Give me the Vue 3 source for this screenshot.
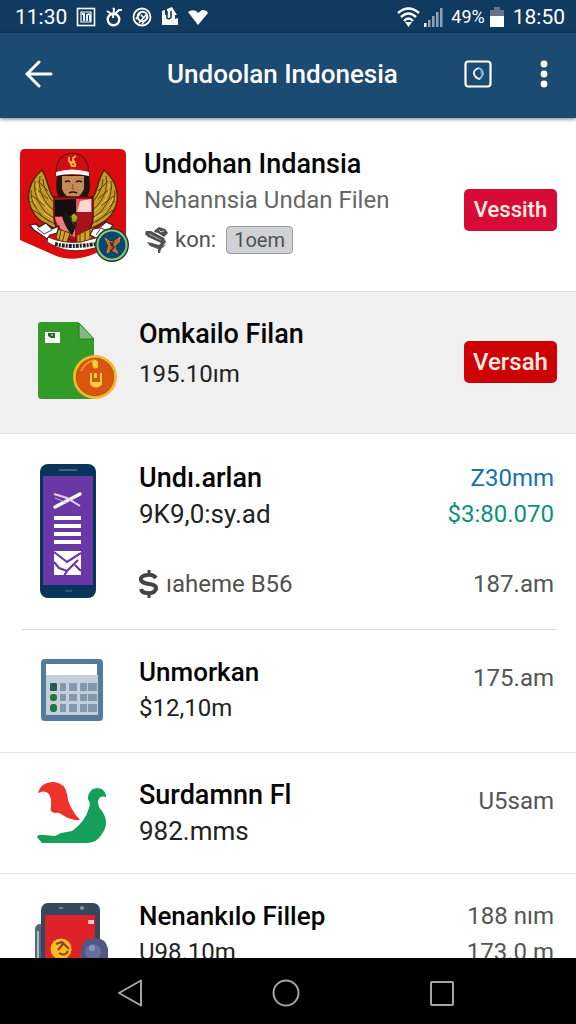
<script setup>
const wingSides = [undefined, 'translate(108 0) scale(-1 1)']
</script>

<template>
  <div class="screen">
    <div class="status">
      <span class="time">11:30</span>
      <div class="notices">
        <svg width="20" height="20" viewBox="0 0 20 20" fill="none" stroke="currentColor">
          <rect x="1.5" y="1.5" width="17" height="17" stroke-width="1.6" />
          <path d="M5 15V5H15V15Z" stroke-width="1.2" />
          <path d="M6 7H8V14M11 14V8Q14 6 14 9V14" stroke-width="1.8" />
        </svg>
        <svg width="18" height="20" viewBox="0 0 18 20" fill="none" stroke="currentColor">
          <circle cx="8.5" cy="12.5" r="5.8" stroke-width="2.4" />
          <path d="M2 4L8 8M8 11L9 2L8 1M10 7L14 3H17" stroke-width="2" />
        </svg>
        <svg width="20" height="20" viewBox="0 0 20 20" fill="none" stroke="currentColor">
          <circle cx="10" cy="10" r="8.5" stroke-width="1.8" />
          <circle cx="10.5" cy="9.5" r="4.8" stroke-width="2" />
          <path d="M4 12L9 5M7 16L14 8M10 17L16 10M9 8L12 11" stroke-width="1.6" />
        </svg>
        <svg width="18" height="20" viewBox="0 0 18 20">
          <path d="M1 18V4L4 3V8H6V2L11 0L14 5L16 8H14V12L17 11V18Z" fill="currentColor" />
          <path d="M6 4V11Q8 13 10 10V4" fill="none" stroke="#123a60" stroke-width="1.6" />
        </svg>
        <svg width="20" height="20" viewBox="0 0 20 20" fill="currentColor">
          <path d="M0 5Q4 2 8 4L10 6L14 3Q19 3 20 6L10 18Z" />
        </svg>
      </div>
      <div class="signals">
        <svg width="23" height="20" viewBox="0 0 23 20" fill="none" stroke="currentColor" stroke-width="2.4">
          <path d="M1 6Q11.5 -3 22 6M4 10Q11.5 3 19 10M7 14Q11.5 9 16 14" />
          <path d="M8 15H15L11.5 20Z" fill="currentColor" stroke="none" />
        </svg>
        <svg width="19" height="20" viewBox="0 0 19 20" fill="#8ba2b8">
          <path d="M0 16H2.500V20H0Z" fill="#fff" />
          <path d="M4 13H6.500V20H4ZM8 9H10.500V20H8ZM12 5H14.500V20H12ZM16 1H18.500V20H16Z" />
        </svg>
        <span class="percent">49%</span>
        <svg width="16" height="20" viewBox="0 0 16 20">
          <path d="M1 3H5V0H11V3H15V9H1Z" fill="#60758b" />
          <path d="M1 9H15V20H1Z" fill="#fff" />
        </svg>
        <span class="time">18:50</span>
      </div>
    </div>

    <header class="bar">
      <button class="icon-button" type="button" aria-label="Back">
        <svg width="28" height="28" viewBox="0 0 28 28" fill="none" stroke="currentColor" stroke-width="3" stroke-linecap="round">
          <path d="M14 2L2 14L14 26M3 14H26" />
        </svg>
      </button>
      <h1>Undoolan Indonesia</h1>
      <button class="icon-button" type="button" aria-label="Scan">
        <svg width="28" height="28" viewBox="0 0 28 28" fill="none" stroke="currentColor">
          <rect x="1.5" y="1.5" width="25" height="25" rx="3" stroke-width="2.2" />
          <path d="M15 8Q9 10 10 14Q11 18 16 19" stroke-width="1.8" />
          <path d="M15 8Q19 10 19 14L16 19" stroke="#94bfe0" stroke-width="1.8" />
          <path d="M17 11V14" stroke="#4386bd" stroke-width="2" />
        </svg>
      </button>
      <button class="icon-button more" type="button" aria-label="More options">
        <svg width="8" height="28" viewBox="0 0 8 28" fill="currentColor">
          <circle cx="4" cy="4" r="3.4" /><circle cx="4" cy="14" r="3.4" /><circle cx="4" cy="24" r="3.4" />
        </svg>
      </button>
    </header>

    <main class="list">
      <section class="row profile">
        <div class="art">
          <svg width="110" height="116" viewBox="0 0 110 116">
            <path d="M5 1H101Q107 1 107 7V88Q91 98 75 106Q53 115 35 107L1 92V7Q1 1 5 1Z" fill="#da0c10" />
            <g v-for="(side, i) in wingSides" :key="i" :transform="side">
              <path d="M23 22C10 33 6 49 13 62C18 74 29 76 39 83L40 52C29 51 31 34 23 22Z" fill="#c29a25" stroke="#4f2608" stroke-width="1.5" />
              <path d="M21 28Q18 43 29 57L39 66M16 33Q13 47 26 64L39 73M12 42Q11 56 24 69L39 78M24 31Q24 44 38 58M12 53L25 65M12 47L26 58M15 39L29 51M19 33L29 43M14 62L31 74" fill="none" stroke="#60400b" />
              <path d="M18 36Q16 50 32 63M14 50Q17 62 35 72" fill="none" stroke="#ebc957" />
            </g>
            <path d="M38 27Q35 52 45 52H66Q73 45 70 27Z" fill="#25130d" />
            <path d="M43 28H65V41Q61 50 54 51Q46 49 43 41Z" fill="#c28b58" />
            <path d="M46 34Q49 32 51 34M57 34Q60 32 63 34M50 45Q54 43 58 45" stroke="#351408" stroke-width="1.6" fill="none" />
            <path d="M54 36L53 41H56" stroke="#8c5029" fill="none" />
            <path d="M37 27Q36 6 53 5Q70 5 70 27Q54 20 37 27Z" fill="#cf0c16" stroke="#460705" />
            <path d="M37 24Q53 19 70 24V28Q53 24 37 28Z" fill="#fff" />
            <path d="M50 9V13Q53 16 56 13M51 14L53 18H57M57 8L54 10V14L57 17" stroke="#f4bd35" stroke-width="1.8" fill="none" />
            <path d="M35 49H74V70Q73 87 54 93Q36 86 35 70Z" fill="#a9121b" stroke="#511015" stroke-width="1.5" />
            <path d="M36 52L57 51V68H36Z" fill="#150e0e" /><path d="M57 51H73V64H57Z" fill="#e85052" />
            <path d="M61 53L72 51V64H58Z" fill="#ffd8d4" /><path d="M36 69H56V89Q38 83 36 69Z" fill="#ec7d85" />
            <path d="M46 63L58 76L53 88Q45 77 43 68Z" fill="#191714" />
            <path d="M52 68L55 65L59 69L57 74H53ZM53 75L58 78" fill="#a5aa21" stroke="#3f4612" />
            <path d="M39 81L51 85L47 97L37 90ZM58 87L75 79L72 93L58 98Z" fill="#d7a12c" stroke="#553205" />
            <path d="M42 82L40 92M46 84L43 95M61 86V97M66 84V96M71 82V92" stroke="#573407" />
            <path d="M11 77L17 76L20 79L27 75L33 81L40 78L38 85L31 87L28 91L21 86L15 82ZM74 81L80 80L87 74L94 77L90 82L86 84L79 91L71 87Z" fill="#fff" stroke="#3b1b17" stroke-width="1.2" />
            <path d="M18 80L25 86L33 82M77 87L82 80L88 83" fill="none" stroke="#503b36" />
            <path d="M29 89Q45 96 62 94L80 89L84 97Q65 105 47 102Q37 100 28 94Z" fill="#fff" stroke="#612314" />
            <path d="M36 96Q51 100 76 96" fill="none" stroke="#222" stroke-width="4" stroke-dasharray="3 1 2 1" />
            <circle cx="93" cy="97" r="17" fill="#153f32" />
            <circle cx="93" cy="97" r="14.5" fill="#07486d" stroke="#98c574" stroke-width="2" />
            <path d="M86 90L91 94H95L101 89L100 94L96 97V101L99 105L93 102L88 105L90 98Z" fill="#c85b20" stroke="#ec8b36" />
            <path d="M91 94L95 99L91 104M95 93L92 98" fill="none" stroke="#42250e" stroke-width="1.4" />
          </svg>
        </div>
        <div class="copy">
          <h2>Undohan Indansia</h2>
          <p class="subtle">Nehannsia Undan Filen</p>
          <p class="meta">
            <svg width="24" height="26" viewBox="0 0 24 26" fill="#505050">
              <path d="M11 3L15 0L21 2L24 6L20 10L14 6L10 5ZM2 4H7L20 11L22 15L19 19L23 17L17 22L16 26H14V22L6 19L3 15L8 16L15 18L17 16L4 10L1 7Z" />
              <path d="M5 7L17 13" stroke="#b0b0b0" />
              <path d="M15 3L17 5L20 4" fill="none" stroke="#ccc" />
            </svg>
            <span>kon:</span><span class="chip">1oem</span>
          </p>
        </div>
        <button class="action rose" type="button">Vessith</button>
      </section>

      <section class="row featured">
        <div class="art">
          <svg width="82" height="82" viewBox="0 0 82 82">
            <path d="M4 1H41L57 18V78H4Q1 78 1 74V4Q1 1 4 1Z" fill="#329b27" />
            <path d="M42 2V18H57Z" fill="#82bb7e" stroke="#217d1d" />
            <path d="M8 11H23V22H8Z" fill="#fff" /><path d="M11 12H18V17H14L11 15Z" fill="#216b1e" /><path d="M14 14H16" stroke="#fff" />
            <circle cx="58" cy="56" r="22" fill="#f2b82e" />
            <circle cx="58" cy="56" r="18.5" fill="#d95611" stroke="#bb5a0b" stroke-width="1.5" />
            <path d="M44 50Q48 41 58 39" stroke="#ff8b28" stroke-width="2" fill="none" />
            <path d="M55 41Q58 37 61 41V46Q58 49 56 46Z" fill="#ffcc3c" />
            <path d="M54 52V63Q59 68 64 63V52" fill="none" stroke="#ffcc3c" stroke-width="2" />
            <path d="M54 61H64V64Q59 68 54 64ZM57 52H60V57H57Z" fill="#ffcc3c" />
          </svg>
        </div>
        <div class="copy"><h2>Omkailo Filan</h2><p>195.10ım</p></div>
        <button class="action" type="button">Versah</button>
      </section>

      <section class="row plan">
        <div class="art">
          <svg width="58" height="136" viewBox="0 0 58 136">
            <rect x="1" y="1" width="56" height="134" rx="8" fill="#0b345a" />
            <path d="M4 13H54V122H4Z" fill="#6938a4" />
            <path d="M20 7H38" stroke="#42627b" stroke-width="2" /><path d="M26 128H33" stroke="#345472" stroke-width="2" />
            <path d="M16 44L41 31" stroke="#fff" stroke-width="3.4" stroke-linecap="round" /><path d="M15 31L28 35L41 43" fill="none" stroke="#e6d2ef" stroke-width="2" /><path d="M16 35L28 40" stroke="#c9addd" />
            <path d="M15 55H42M15 63H42M15 71H42M15 79H42" stroke="#fff" stroke-width="4" />
            <path d="M15 88H42V112H15Z" fill="#fff" />
            <path d="M15 89L28 99L42 90M15 99L20 105L28 108L39 97M28 108L25 113M36 102L42 108" fill="none" stroke="#6938a4" stroke-width="2.2" />
          </svg>
        </div>
        <div class="copy">
          <h2>Undı.arlan</h2><p class="large">9K9,0:sy.ad</p>
          <p class="meta later">
            <svg width="20" height="30" viewBox="0 0 20 30" fill="none" stroke="#444" stroke-width="4">
              <path d="M17 9Q14 5 8 6Q1 7 2 11Q3 14 10 15Q18 16 17 20Q15 25 8 24Q3 24 2 20" /><path d="M10 1V7M10 23V29" stroke-width="3" />
            </svg><span>ıaheme B56</span>
          </p>
        </div>
        <div class="values"><span class="blue">Z30mm</span><span class="green">$3:80.070</span><span class="later">187.am</span></div>
      </section>

      <section class="row compact">
        <div class="art">
          <svg width="64" height="64" viewBox="0 0 64 64">
            <rect x="1" y="1" width="62" height="62" rx="4" fill="#557b9b" />
            <path d="M6 6H57V17H6Z" fill="#fff" /><path d="M6 17H58V57H6Z" fill="#c5cfdb" />
            <path d="M20 25H26V33H20ZM29 25H37V33H29ZM40 25H47V33H40ZM48 25H57V33H48ZM20 36H26V43H20ZM29 36H37V43H29ZM40 36H47V43H40ZM48 36H57V43H48ZM20 46H26V54H20ZM29 46H37V54H29ZM40 46H47V54H40ZM48 46H57V54H48Z" fill="#8498ac" />
            <rect x="10" y="25" width="7" height="8" rx="1" fill="#285b58" /><rect x="10" y="36" width="7" height="7" rx="3" fill="#27733f" /><rect x="10" y="46" width="7" height="8" rx="3" fill="#237543" />
          </svg>
        </div>
        <div class="copy"><h2>Unmorkan</h2><p>$12,10m</p></div>
        <div class="values lowered"><span>175.am</span></div>
      </section>

      <section class="row bird">
        <div class="art">
          <svg width="70" height="64" viewBox="0 0 70 64">
            <path d="M1 12Q4 1 17 1Q28 2 30 13Q31 26 43 39Q34 40 24 33Q21 31 18 32Q12 31 14 26Q15 16 11 12Q7 9 1 12Z" fill="#ee332b" />
            <path d="M51 18Q51 8 60 7Q67 7 69 14V16Q62 14 61 21Q61 26 65 30Q73 42 65 53Q60 62 49 62H5L0 56Q1 53 7 54L18 55L24 52L35 50Q48 41 52 27Q54 23 51 18Z" fill="#14a05b" />
          </svg>
        </div>
        <div class="copy"><h2>Surdamnn Fl</h2><p class="large">982.mms</p></div>
        <div class="values lowered"><span>U5sam</span></div>
      </section>

      <section class="row compact">
        <div class="art">
          <svg width="76" height="76" viewBox="0 0 76 76">
            <rect x="1" y="22" width="18" height="60" rx="5" fill="#596879" /><path d="M4 29V76" stroke="#b3bbc4" stroke-width="2" />
            <rect x="7" y="1" width="59" height="85" rx="7" fill="#34475b" /><path d="M11 13H61V76H11Z" fill="#df2229" />
            <circle cx="48" cy="6" r="2" fill="#8496a8" /><path d="M25 6H29" stroke="#687d91" stroke-width="2" /><path d="M54 18H60V22H54Z" fill="#ffc1c2" />
            <circle cx="27" cy="47" r="10.5" fill="#fbbd22" /><path d="M22 42L28 40L35 47M29 42L24 48M25 51Q31 55 34 49" stroke="#913d17" stroke-width="2" fill="none" />
            <path d="M47 76V46Q50 36 61 36Q72 36 74 47V76Z" fill="#515785" /><circle cx="59" cy="50" r="8" fill="#666c9b" /><circle cx="58" cy="46" r="3" fill="#8d94ba" />
          </svg>
        </div>
        <div class="copy"><h2>Nenankılo Fillep</h2><p>U98.10m</p></div>
        <div class="values"><span>188 nım</span><span>173.0 m</span></div>
      </section>
    </main>

    <nav class="system">
      <button type="button" aria-label="Back"><svg width="28" height="28" viewBox="0 0 28 28"><path d="M25 1.5V26.500L3 14Z" /></svg></button>
      <button type="button" aria-label="Home"><svg width="28" height="28" viewBox="0 0 28 28"><circle cx="14" cy="14" r="12.5" /></svg></button>
      <button type="button" aria-label="Recent apps"><svg width="28" height="28" viewBox="0 0 28 28"><rect x="3" y="3" width="22" height="23" rx="1" /></svg></button>
    </nav>
  </div>
</template>

<style>
body { margin: 0; }
</style>

<style scoped>
* { box-sizing: border-box; }
.screen { height: 100vh; display: flex; flex-direction: column; overflow: hidden; background: #fff; color: #333; font-family: Roboto, "Liberation Sans", sans-serif; }
h1, h2, p { margin: 0; }
svg { display: block; flex-shrink: 0; }
button { border: 0; padding: 0; background: none; color: inherit; font: inherit; cursor: pointer; }
.status { flex: none; display: flex; align-items: center; height: 33px; padding: 0 11px 0 15px; background: #113a60; color: #fff; }
.time { font-size: 21px; line-height: 32px; }
.notices { display: flex; gap: 9px; margin-left: 9px; }
.signals { display: flex; align-items: center; gap: 4px; margin-left: auto; }
.signals .time { margin-left: 4px; }
.percent { margin-left: 4px; font-size: 18px; line-height: 32px; }
.bar { flex: none; display: flex; align-items: center; height: 85px; padding: 0 28px 4px 25px; background: #1b4a73; color: #fff; box-shadow: 0 1px 4px #0008; position: relative; }
.bar h1 { flex: 1; margin: 0 64px 0 114px; font-size: 26px; font-weight: 500; line-height: 36px; white-space: nowrap; }
.bar .more { margin-left: 48px; }
.list { flex: 1; min-height: 0; overflow: hidden; }
.row { display: flex; align-items: flex-start; padding: 24px 22px 26px 0; border-bottom: 1px solid #e5e5e5; }
.art { flex: none; display: flex; justify-content: center; width: 139px; height: 72px; padding: 4px 0 0 4px; }
.copy { flex: 1; min-width: 0; }
h2 { color: #050505; font-size: 27px; font-weight: 500; line-height: 36px; white-space: nowrap; }
.compact h2 { font-size: 26px; }
p { color: #222; font-size: 24px; line-height: 36px; white-space: nowrap; }
.large { font-size: 26px; }
.subtle { color: #666; }
.values { display: flex; flex-direction: column; text-align: right; color: #555; font-size: 24px; line-height: 36px; white-space: nowrap; }
.lowered { padding-top: 6px; }
.later { margin-top: 34px; }
.meta { display: flex; align-items: center; gap: 7px; color: #505050; }
.blue { color: #1673aa; }
.green { color: #0b927c; }
.action { width: 93px; height: 42px; margin: 25px -3px 0 0; border-radius: 5px; background: #cc0204; color: #ffebe4; font-size: 24px; font-weight: 500; line-height: 42px; }
.profile { padding: 28px 22px 33px 0; border-color: #ddd; }
.profile .art { width: 144px; padding: 2px 0 0 3px; }
.profile .meta { padding-top: 4px; font-size: 22px; }
.rose { margin-top: 43px; background: #d80b37; font-size: 22px; }
.chip { height: 28px; margin-left: 3px; padding: 0 7px; border: 1px solid #999ba0; border-radius: 4px; background: #d0d1d5; font-size: 20px; line-height: 26px; }
.featured { padding-bottom: 41px; background: #f0f0f1; }
.featured .art { padding: 5px 0 0 16px; }
.featured .copy { display: grid; gap: 4px; }
.plan { position: relative; padding: 26px 22px 27px 0; border-color: transparent; }
.plan .art { height: 136px; padding: 3px 3px 0 0; }
.plan::after { content: ""; position: absolute; right: 19px; bottom: -1px; left: 22px; height: 1px; background: #ddd; }
.bird { padding-bottom: 24px; }
.system { flex: none; display: flex; justify-content: center; align-items: center; gap: 128px; height: 66px; padding: 4px 4px 0 0; background: #000; }
.system svg { fill: none; stroke: #a5a5a5; stroke-width: 2; stroke-linejoin: round; }
</style>
